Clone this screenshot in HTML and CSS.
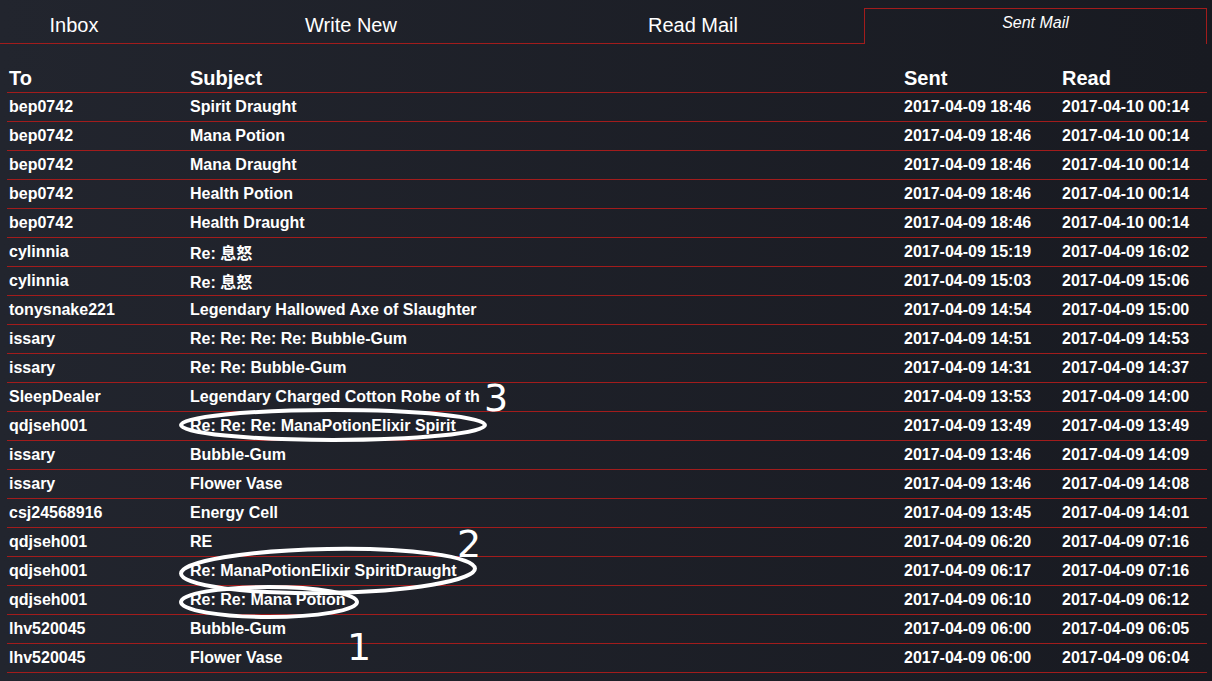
FILE: index.html
```html
<!DOCTYPE html>
<html lang="en">
<head>
  <meta charset="utf-8">
  <title>Sent Mail</title>
  <link rel="stylesheet" href="styles.css">
</head>
<body>
  <nav class="tabs">
    <a class="tab tab-first" href="#">Inbox</a>
    <a class="tab" href="#">Write New</a>
    <a class="tab" href="#">Read Mail</a>
    <a class="tab active" href="#">Sent Mail</a>
  </nav>

  <table class="mail">
    <colgroup>
      <col class="c-to"><col class="c-subject"><col class="c-sent"><col class="c-read">
    </colgroup>
    <thead>
      <tr><th>To</th><th>Subject</th><th>Sent</th><th>Read</th></tr>
    </thead>
    <tbody>
      <tr><td>bep0742</td><td>Spirit Draught</td><td>2017-04-09 18:46</td><td>2017-04-10 00:14</td></tr>
      <tr><td>bep0742</td><td>Mana Potion</td><td>2017-04-09 18:46</td><td>2017-04-10 00:14</td></tr>
      <tr><td>bep0742</td><td>Mana Draught</td><td>2017-04-09 18:46</td><td>2017-04-10 00:14</td></tr>
      <tr><td>bep0742</td><td>Health Potion</td><td>2017-04-09 18:46</td><td>2017-04-10 00:14</td></tr>
      <tr><td>bep0742</td><td>Health Draught</td><td>2017-04-09 18:46</td><td>2017-04-10 00:14</td></tr>
      <tr><td>cylinnia</td><td>Re: 息怒</td><td>2017-04-09 15:19</td><td>2017-04-09 16:02</td></tr>
      <tr><td>cylinnia</td><td>Re: 息怒</td><td>2017-04-09 15:03</td><td>2017-04-09 15:06</td></tr>
      <tr><td>tonysnake221</td><td>Legendary Hallowed Axe of Slaughter</td><td>2017-04-09 14:54</td><td>2017-04-09 15:00</td></tr>
      <tr><td>issary</td><td>Re: Re: Re: Re: Bubble-Gum</td><td>2017-04-09 14:51</td><td>2017-04-09 14:53</td></tr>
      <tr><td>issary</td><td>Re: Re: Bubble-Gum</td><td>2017-04-09 14:31</td><td>2017-04-09 14:37</td></tr>
      <tr><td>SleepDealer</td><td>Legendary Charged Cotton Robe of th</td><td>2017-04-09 13:53</td><td>2017-04-09 14:00</td></tr>
      <tr><td>qdjseh001</td><td>Re: Re: Re: ManaPotionElixir Spirit</td><td>2017-04-09 13:49</td><td>2017-04-09 13:49</td></tr>
      <tr><td>issary</td><td>Bubble-Gum</td><td>2017-04-09 13:46</td><td>2017-04-09 14:09</td></tr>
      <tr><td>issary</td><td>Flower Vase</td><td>2017-04-09 13:46</td><td>2017-04-09 14:08</td></tr>
      <tr><td>csj24568916</td><td>Energy Cell</td><td>2017-04-09 13:45</td><td>2017-04-09 14:01</td></tr>
      <tr><td>qdjseh001</td><td>RE</td><td>2017-04-09 06:20</td><td>2017-04-09 07:16</td></tr>
      <tr><td>qdjseh001</td><td>Re: ManaPotionElixir SpiritDraught</td><td>2017-04-09 06:17</td><td>2017-04-09 07:16</td></tr>
      <tr><td>qdjseh001</td><td>Re: Re: Mana Potion</td><td>2017-04-09 06:10</td><td>2017-04-09 06:12</td></tr>
      <tr><td>lhv520045</td><td>Bubble-Gum</td><td>2017-04-09 06:00</td><td>2017-04-09 06:05</td></tr>
      <tr><td>lhv520045</td><td>Flower Vase</td><td>2017-04-09 06:00</td><td>2017-04-09 06:04</td></tr>
    </tbody>
  </table>

  <svg class="marks" width="1212" height="681" viewBox="0 0 1212 681">
    <g fill="none" stroke="#fff" stroke-width="4">
      <ellipse cx="333" cy="425" rx="152" ry="15"/>
      <ellipse cx="328" cy="571" rx="147" ry="22" transform="rotate(-1 328 571)"/>
      <ellipse cx="269" cy="602" rx="88" ry="15"/>
    </g>
    <g class="marks-num" fill="#fff">
      <text x="484" y="411">3</text>
      <text x="457" y="557">2</text>
      <text x="347" y="660">1</text>
    </g>
  </svg>
</body>
</html>
```

FILE: styles.css
```css
* { box-sizing: border-box; }
html, body { height: 100%; }
body { margin: 0; font-family: "Liberation Sans", Arial, "Noto Sans CJK SC", sans-serif; color: #fff; background: linear-gradient(to right, #22252e, #181a21); position: relative; overflow: hidden; }

.tabs { display: flex; align-items: flex-end; height: 44px; }
.tab { display: block; height: 44px; width: 342px; border-bottom: 1px solid #a21c1c; color: #fff; text-decoration: none; font-size: 20px; text-align: center; line-height: 50px; }
.tab-first { width: 180px; padding-right: 32px; }
.tab.active { width: 343px; height: 36px; border: 1px solid #a21c1c; border-bottom: 0; font-style: italic; font-size: 16px; line-height: 28px; }

.mail { margin: 17px 0 0 7px; width: 1200px; border-collapse: collapse; table-layout: fixed; }
.c-to { width: 181px; }
.c-subject { width: 714px; }
.c-sent { width: 158px; }
.c-read { width: 147px; }
.mail th, .mail td { text-align: left; padding: 0 0 0 2px; border-bottom: 1px solid #a21c1c; white-space: nowrap; overflow: hidden; font-weight: bold; }
.mail th { font-size: 20px; height: 31px; line-height: 28px; vertical-align: bottom; }
.mail td { font-size: 16px; height: 29px; }

.marks { position: absolute; left: 0; top: 0; pointer-events: none; }
.marks-num text { font-family: "DejaVu Sans", sans-serif; font-size: 38px; }
```
